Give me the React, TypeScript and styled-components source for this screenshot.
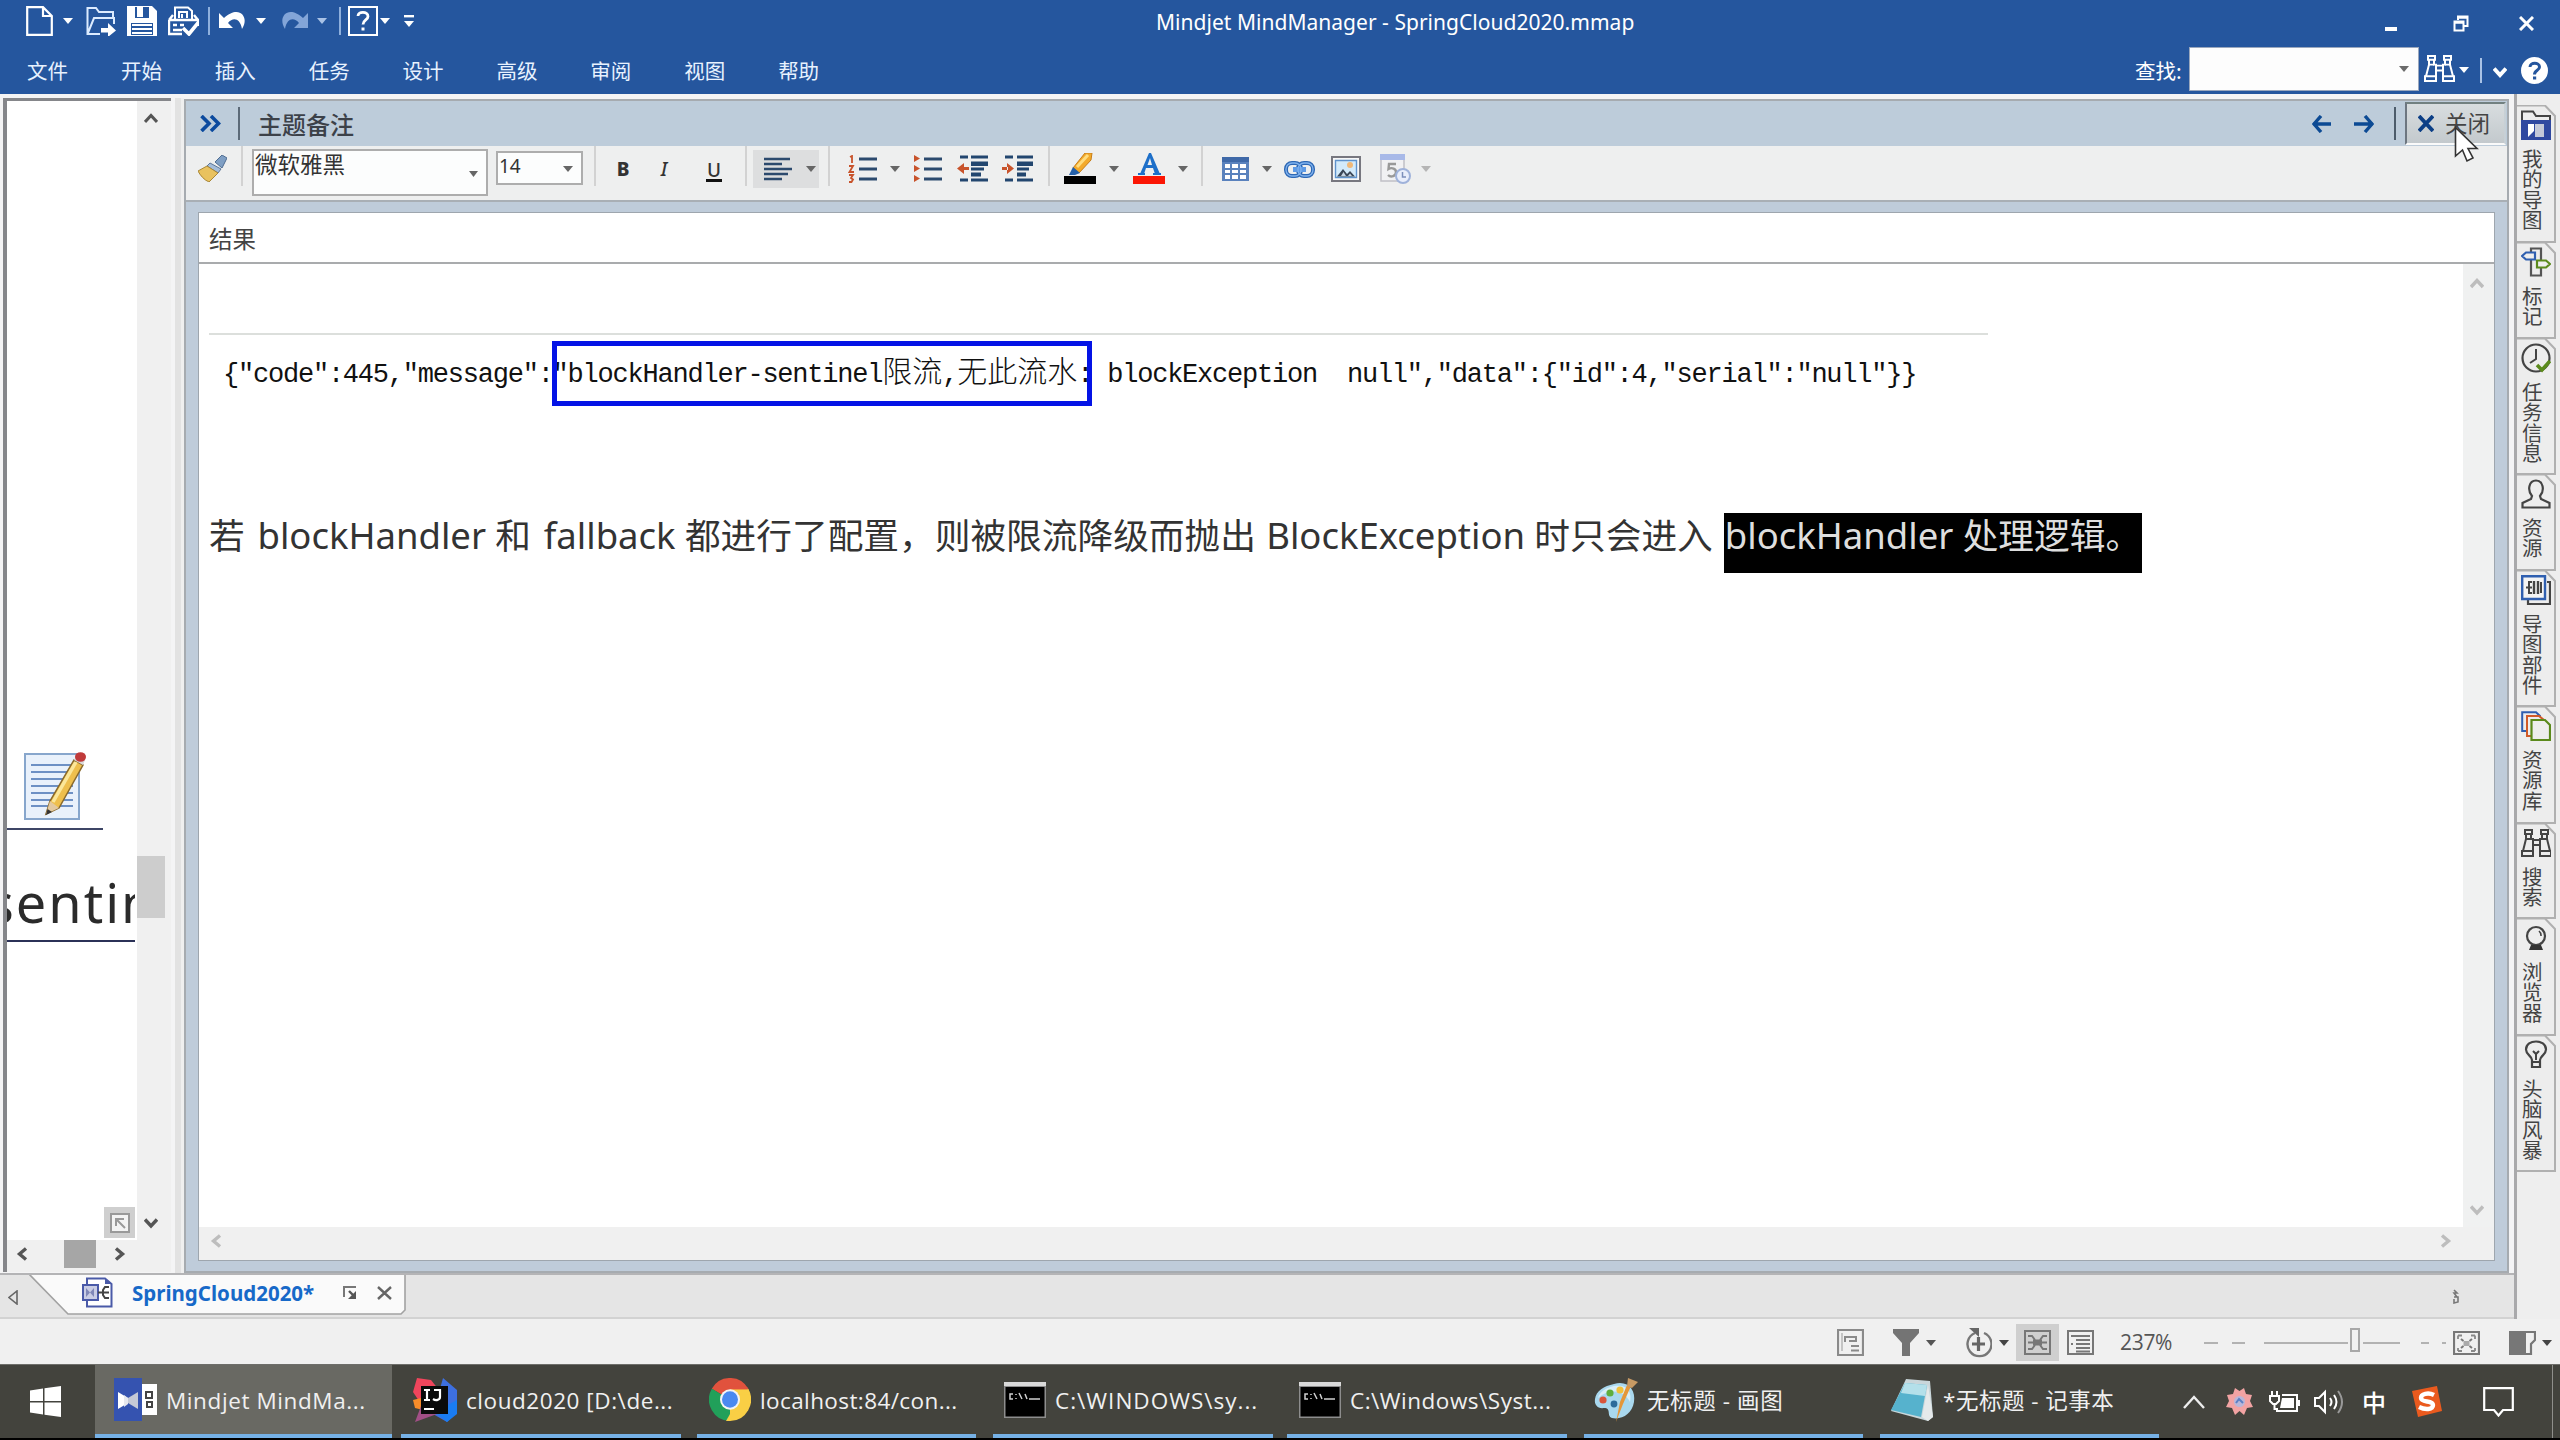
import React from "react";
import styled, { createGlobalStyle, css } from "styled-components";

const UI = `"Noto Sans", "Noto Sans CJK SC", sans-serif`;
const CJK = `"Noto Sans CJK SC", "Noto Sans", sans-serif`;

const Global = createGlobalStyle`
  *, *::before, *::after { box-sizing: border-box; }
  html, body { margin: 0; padding: 0; background: #f0f0f0; }
  body { font-family: ${UI}; overflow: hidden; }
  svg { display: block; flex: none; }
`;

/* ---------- shared parts ---------- */

const Screen = styled.div`
  width: 2560px;
  height: 1440px;
  display: flex;
  flex-direction: column;
  overflow: hidden;
  background: #f0f0f0;
`;

const IconBox = styled.span<{ $ml?: number; $mt?: number }>`
  display: block;
  flex: none;
  margin-left: ${(p) => p.$ml ?? 0}px;
  margin-top: ${(p) => p.$mt ?? 0}px;
`;

type IconProps = {
  w: number;
  h: number;
  vb?: string;
  ml?: number;
  mt?: number;
  children: React.ReactNode;
};

const Icon = ({ w, h, vb, ml, mt, children }: IconProps) => (
  <IconBox $ml={ml} $mt={mt}>
    <svg width={w} height={h} viewBox={vb ?? `0 0 ${w} ${h}`} fill="none" preserveAspectRatio="none">
      {children}
    </svg>
  </IconBox>
);

const Caret = ({ ml, mt, color = "#666", w = 10 }: { ml?: number; mt?: number; color?: string; w?: number }) => (
  <Icon w={w} h={6} vb="0 0 10 6" ml={ml} mt={mt}>
    <path d="M0 0H10L5 6Z" fill={color} />
  </Icon>
);

const Divider = styled.span<{ $ml: number; $h: number; $c: string; $w?: number }>`
  flex: none;
  width: ${(p) => p.$w ?? 2}px;
  height: ${(p) => p.$h}px;
  margin-left: ${(p) => p.$ml}px;
  background: ${(p) => p.$c};
`;

const Chevron = ({ dir, color, s = 14, sw = 3.4, ml, mt }: { dir: "up" | "down" | "left" | "right"; color: string; s?: number; sw?: number; ml?: number; mt?: number }) => {
  const d = {
    up: "M1 11L7 4.500L13 11",
    down: "M1 3.500L7 10L13 3.500",
    left: "M11 1.500L4.500 7L11 12.500",
    right: "M3 1.500L9.500 7L3 12.500",
  }[dir];
  return (
    <Icon w={s} h={s} vb="0 0 14 14" ml={ml} mt={mt}>
      <path d={d} stroke={color} strokeWidth={sw} />
    </Icon>
  );
};

/* ---------- title bar and menu ---------- */

const TopBar = styled.header`
  height: 94px;
  flex: none;
  background: #25569e;
  color: #fff;
`;

const TitleRow = styled.div`
  display: flex;
  height: 47px;
  padding-left: 26px;
`;

const QuickTools = styled.div`
  display: flex;
  align-items: center;
  width: 1130px;
  height: 41px;
`;

const WindowTitle = styled.div`
  font-size: 21px;
  line-height: 45px;
  letter-spacing: 0.03px;
  white-space: nowrap;
`;

const WindowButtons = styled.div`
  display: flex;
  align-items: center;
  height: 47px;
  margin-left: auto;
  padding-right: 26px;
`;

const MenuRow = styled.nav`
  display: flex;
  height: 47px;
  padding-left: 27px;
`;

const MenuItem = styled.span`
  width: 93.9px;
  font: 20.5px/47px ${CJK};
  color: #e8f2ff;
`;

const SearchArea = styled.div`
  display: flex;
  align-items: center;
  height: 46px;
  margin-left: auto;
  padding-right: 12px;
`;

const SearchLabel = styled.span`
  font: 20.5px/44px ${CJK};
  width: 54px;
  white-space: nowrap;
`;

const SearchInput = styled.div`
  display: flex;
  align-items: center;
  justify-content: flex-end;
  align-self: flex-start;
  width: 230px;
  height: 44px;
  padding-right: 9px;
  background: #fdfdfd;
  border: 1px solid #9aa7bd;
`;

const BinocularPaths = ({ c }: { c: string }) => (
  <g stroke={c} strokeWidth="2">
    <path d="M4 2h7v4H4zM20 2h7v4h-7zM5 6v5L2 23M10 6v5h2v12M21 6v5h-2v12M26 6v5l3 12" />
    <path d="M1 23h11v5H1zM19 23h11v5H19zM11 12h9M12 17h7M5 11h5M21 11h5" />
  </g>
);

const TopHeader = () => (
  <TopBar>
    <TitleRow>
      <QuickTools>
        <Icon w={27} h={30}>
          <path d="M1.200 1.200H17L25.800 10V28.800H1.200ZM17 1.200V10H25.800" stroke="#fff" strokeWidth="2.200" />
        </Icon>
        <Caret ml={10} color="#fff" />
        <Icon w={30} h={30} ml={13}>
          <path d="M14 28H1.500V2H10L13 6H27V12M1.500 28L8 12H28V18" stroke="#dcebff" strokeWidth="2" />
          <path d="M15 22H22V17L30 24.500L22 31V26.500H15Z" fill="#fff" />
        </Icon>
        <Icon w={30} h={30} ml={11}>
          <path d="M0 0H25L30 5V30H0Z" fill="#fff" />
          <path d="M8 1H22V12H8Z" fill="#25569e" />
          <path d="M10 1H16V11H10Z" fill="#fff" />
          <path d="M4 17H26V29H4Z" fill="#25569e" />
          <path d="M5 19H25M5 23H25M5 27H25" stroke="#fff" strokeWidth="2.200" />
        </Icon>
        <Icon w={31} h={30} ml={11}>
          <path d="M7 14V1.500H20L24 5V14M11 12V6H19V12M14 12V8" stroke="#fff" strokeWidth="2" />
          <path d="M1 14L5 9M30 14L26 9M1 14H30V20M1 14V28H14" stroke="#fff" strokeWidth="2.400" />
          <path d="M5 19H9M12 19H16M5 24H14" stroke="#fff" strokeWidth="2.400" />
          <path d="M15 22L21 28L30 17" stroke="#fff" strokeWidth="3.600" />
        </Icon>
        <Divider $ml={9} $h={28} $c="#8fb0dd" />
        <Icon w={28} h={24} ml={9}>
          <path d="M0 4V19H14L9 14C14 8 21 9 23 20C31 8 20 -5 5 9Z" fill="#fff" />
        </Icon>
        <Caret ml={9} color="#fff" />
        <Icon w={28} h={24} ml={14}>
          <path d="M28 4V19H14L19 14C14 8 7 9 5 20C-3 8 8 -5 23 9Z" fill="#83a5d8" />
        </Icon>
        <Caret ml={9} color="#a9c2e6" />
        <Divider $ml={12} $h={28} $c="#8fb0dd" />
        <Icon w={30} h={30} ml={7}>
          <path d="M1 1H29V29H1Z" stroke="#fff" strokeWidth="2" />
          <path d="M10 10C10 5 20 5 20 10.500C20 14 15 14 15 18.500" stroke="#fff" strokeWidth="2.800" />
          <path d="M13.500 21.500H16.500V24.500H13.500Z" fill="#fff" />
        </Icon>
        <Caret ml={2} color="#fff" />
        <Icon w={10} h={12} ml={14}>
          <path d="M0 1.200H10" stroke="#fff" strokeWidth="2.400" />
          <path d="M0 6H10L5 12Z" fill="#fff" />
        </Icon>
      </QuickTools>
      <WindowTitle>Mindjet MindManager - SpringCloud2020.mmap</WindowTitle>
      <WindowButtons>
        <Icon w={12} h={4} mt={10}>
          <path d="M0 0H12V4H0Z" fill="#fff" />
        </Icon>
        <Icon w={16} h={17} ml={56}>
          <path d="M5 5V1.500H14.500V11H11M1.500 6.500H10.500V15.500H1.500Z" stroke="#fff" strokeWidth="2" />
          <path d="M5 2.500H15M1 7.500H11" stroke="#fff" strokeWidth="2.500" />
        </Icon>
        <Icon w={15} h={15} ml={50}>
          <path d="M1 1L14 14M14 1L1 14" stroke="#fff" strokeWidth="3" />
        </Icon>
      </WindowButtons>
    </TitleRow>
    <MenuRow>
      {["文件", "开始", "插入", "任务", "设计", "高级", "审阅", "视图", "帮助"].map((m) => (
        <MenuItem key={m}>{m}</MenuItem>
      ))}
      <SearchArea>
        <SearchLabel>查找:</SearchLabel>
        <SearchInput>
          <Caret color="#6b6b6b" />
        </SearchInput>
        <Icon w={31} h={29} vb="0 0 31 30" ml={5} mt={-3}>
          <BinocularPaths c="#fff" />
        </Icon>
        <Caret ml={4} color="#fff" />
        <Divider $ml={11} $h={25} $c="#a9c2e6" />
        <Chevron dir="down" color="#fff" sw={4} ml={11} mt={3} />
        <Icon w={27} h={27} ml={14}>
          <circle cx="13.500" cy="13.500" r="13.500" fill="#fff" />
          <path d="M9 10C9 5 18.500 5 18.500 10C18.500 13.500 13.500 13 13.500 17.500" stroke="#25569e" strokeWidth="3" />
          <path d="M12 19.500H15.200V22.500H12Z" fill="#25569e" />
        </Icon>
      </SearchArea>
    </MenuRow>
  </TopBar>
);

/* ---------- map pane on the left ---------- */

const Body = styled.div`
  display: flex;
  height: 1225px;
  flex: none;
`;

const MainColumn = styled.div`
  display: flex;
  flex-direction: column;
  width: 2514px;
  flex: none;
`;

const WorkArea = styled.div`
  display: flex;
  height: 1181px;
  padding-top: 4px;
  background: #f4f4f5;
  border-bottom: 2px solid #b4b4b6;
`;

const MapPane = styled.section`
  display: flex;
  flex-direction: column;
  width: 168px;
  height: 1174px;
  margin-left: 3px;
  flex: none;
  border-left: 4px solid #85868a;
  border-top: 3px solid #85868a;
  background: #fff;
`;

const MapTop = styled.div`
  display: flex;
  height: 1139px;
`;

const MapCanvas = styled.div`
  width: 130px;
  padding-right: 2px;
  overflow: hidden;
  background: #fff;
`;

const NoteMark = styled.div`
  padding: 651px 0 8px 17px;
  width: 96px;
  border-bottom: 2px solid #3d4566;
`;

const TopicText = styled.div`
  height: 112px;
  padding: 34px 0 0;
  border-bottom: 2px solid #2b3157;
  font: 54px/76px ${UI};
  letter-spacing: 2px;
  color: #2b2b2b;
  text-indent: -19px;
  white-space: nowrap;
  overflow: hidden;
`;

const LocateButton = styled.div`
  display: flex;
  align-items: center;
  justify-content: center;
  width: 31px;
  height: 31px;
  margin: 265px 0 0 97px;
  background: #cfcfcf;
`;

const MapVScroll = styled.div`
  display: flex;
  flex-direction: column;
  align-items: flex-start;
  width: 34px;
  background: #f0f0f0;
`;

const VThumb = styled.div`
  width: 28px;
  height: 62px;
  margin: 731px 0 298px;
  background: #cdcdcd;
`;

const MapHScroll = styled.div`
  display: flex;
  align-items: flex-start;
  height: 32px;
  background: #f0f0f0;
`;

const HThumb = styled.div`
  width: 32px;
  height: 28px;
  margin-left: 35px;
  background: #a6a6a6;
`;

const Splitter = styled.div`
  width: 9px;
  flex: none;
  margin-left: 4px;
  background: linear-gradient(90deg, #e2e2e2 0 6px, #efefef 6px);
`;

const MapArea = () => (
  <MapPane>
    <MapTop>
      <MapCanvas>
        <NoteMark>
          <Icon w={62} h={68}>
            <path d="M1 2H55V67H1Z" fill="#e9f1fb" stroke="#87a6cc" strokeWidth="2" />
            <path d="M7 13H49M7 20H49M7 27H49M7 34H49M7 41H49M7 48H49M7 54H49" stroke="#6d90c4" strokeWidth="2.200" />
            <path d="M22 62L26 49L50 8L59 13L35 56Z" fill="#eebf4d" stroke="#8a6a2c" strokeWidth="1.500" />
            <path d="M29 50L52 10" stroke="#fbe79a" strokeWidth="3.500" />
            <path d="M22 62L26 49L35 56Z" fill="#e3c9a0" />
            <path d="M22 63L23.500 57L28 60Z" fill="#333" />
            <path d="M50 8L53 3L61 8L59 13Z" fill="#d9d9d9" />
            <ellipse cx="56.500" cy="5" rx="5.500" ry="4.800" fill="#c03a3a" />
          </Icon>
        </NoteMark>
        <TopicText>sentinel</TopicText>
        <LocateButton>
          <Icon w={20} h={20}>
            <path d="M1 1H19V19H1Z" fill="#f3f3f3" stroke="#999" strokeWidth="2" />
            <path d="M6 13V6H14M6 6L15 15" stroke="#999" strokeWidth="2" />
          </Icon>
        </LocateButton>
      </MapCanvas>
      <MapVScroll>
        <Chevron dir="up" color="#555" sw={3} ml={7} mt={10} />
        <VThumb />
        <Chevron dir="down" color="#555" ml={7} />
      </MapVScroll>
    </MapTop>
    <MapHScroll>
      <Chevron dir="left" color="#555" ml={8} mt={7} />
      <HThumb />
      <Chevron dir="right" color="#555" ml={17} mt={7} />
    </MapHScroll>
  </MapPane>
);

/* ---------- notes panel ---------- */

const NotesPanel = styled.section`
  display: flex;
  flex-direction: column;
  width: 2325px;
  height: 1174px;
  margin-top: 1px;
  flex: none;
  border: 2px solid #a6abb0;
  background: #bfccda;
`;

const NotesHeader = styled.div`
  position: relative;
  display: flex;
  align-items: center;
  height: 45px;
  padding-left: 14px;
  background: #bdccda;
`;

const NotesTitle = styled.h2`
  margin: 0 auto 0 18px;
  font: 500 24px/43px ${CJK};
  color: #3c4149;
`;

const CloseButton = styled.div`
  display: flex;
  align-items: center;
  align-self: flex-start;
  width: 101px;
  height: 43px;
  margin: 1px 1px 0 9px;
  padding-left: 11px;
  border: 2px solid #fafafa;
  border-top-color: #718080;
  border-left-color: #6d7680;
  border-right-color: #c7d0d6;
  background: linear-gradient(#d8dddf, #c3c9cd);
  font: 22.5px/36px ${CJK};
  color: #444;
  gap: 11px;
  white-space: nowrap;
`;

const CloseText = styled.span`
  height: 39px;
`;

const Pointer = styled.span`
  position: absolute;
  left: 2268px;
  top: 25px;
  z-index: 3;
`;

const Toolbar = styled.div`
  display: flex;
  align-items: flex-start;
  height: 56px;
  padding-left: 12px;
  background: #eeefef;
  border-bottom: 2px solid #a9afb5;
`;

const ToolGroup = styled.div<{ $ml?: number; $on?: boolean }>`
  display: flex;
  align-items: center;
  height: 38px;
  margin: 4px 0 0 ${(p) => p.$ml ?? 0}px;
  ${(p) =>
    p.$on &&
    css`
      background: #dddedf;
      padding: 0 3px 0 11px;
    `}
`;

const Combo = styled.div<{ $w: number; $h: number; $ml: number; $mt: number }>`
  display: flex;
  justify-content: space-between;
  width: ${(p) => p.$w}px;
  height: ${(p) => p.$h}px;
  margin: ${(p) => p.$mt}px 0 0 ${(p) => p.$ml}px;
  padding: 0 8px 0 1px;
  border: 2px solid #adadad;
  background: #fcfdfd;
  font: 22.500px/24px ${CJK};
  color: #333;
`;

const SizeText = styled.span`
  font: 19px/27px ${UI};
`;

const Letter = styled.span<{ $kind: "b" | "i" | "u"; $ml: number }>`
  width: 16px;
  margin-left: ${(p) => p.$ml}px;
  text-align: center;
  font: ${(p) => (p.$kind === "b" ? "800" : p.$kind === "i" ? "italic 500" : "500")} 19px/20px ${UI};
  color: #333;
  ${(p) =>
    p.$kind === "u" &&
    css`
      border-bottom: 3px solid #111;
      margin-top: 4px;
      line-height: 18px;
    `}
`;

const NotesBody = styled.div`
  display: flex;
  flex: 1;
  padding: 10px 12px 10px 12px;
`;

const NoteBox = styled.div`
  display: flex;
  flex-direction: column;
  width: 100%;
  border: 1px solid #9ea6ae;
  background: #fff;
`;

const NoteTopic = styled.div`
  height: 51px;
  padding-left: 10px;
  border-bottom: 2px solid #a9abad;
  font: 23.5px/51px ${CJK};
  color: #444;
`;

const NoteScroller = styled.div`
  display: flex;
  flex: 1;
`;

const Doc = styled.article`
  display: flex;
  flex-direction: column;
  width: 2264px;
  padding-left: 10px;
`;

const Rule = styled.hr`
  width: 1779px;
  height: 2px;
  margin: 69px 0 0;
  border: 0;
  background: #dcdfdc;
`;

const CodeLine = styled.div`
  position: relative;
  height: 65px;
  margin-top: 6px;
  padding-left: 14px;
  font: 27px/56px "Liberation Mono", "Noto Sans CJK SC", monospace;
  letter-spacing: -1.22px;
  color: #111;
  white-space: pre;
`;

const CodeCjk = styled.span`
  font: 300 30px/56px ${CJK};
  letter-spacing: 0;
`;

const BlueFrame = styled.span`
  position: absolute;
  left: 343px;
  top: 0;
  width: 540px;
  height: 65px;
  border: 5px solid #0413e6;
`;

const Paragraph = styled.p`
  display: flex;
  height: 60px;
  margin: 107px 0 0;
  font: 35.7px/44px ${UI};
  color: #333;
  white-space: pre;
`;

const Latin = styled.span<{ $ml?: number }>`
  font-size: 36.5px;
  margin-left: ${(p) => p.$ml ?? 3.5}px;
`;

const Marked = styled.span`
  width: 418px;
  margin-left: 11px;
  padding-left: 1px;
  background: #000;
  color: #dedede;
`;

const DocVScroll = styled.div`
  display: flex;
  flex-direction: column;
  justify-content: space-between;
  width: 31px;
  padding: 12px 7px 10px;
  background: #f0f1f1;
`;

const DocHScroll = styled.div`
  display: flex;
  align-items: center;
  justify-content: space-between;
  width: 2295px;
  height: 33px;
  padding: 0 41px 5px 10px;
  background: #f0f0f0;
`;

const ListLines = ({ x, ys }: { x: number; ys: number[] }) => (
  <>
    {ys.map((y) => (
      <path key={y} d={`M${x} ${y}H29`} stroke="#2c4a6e" strokeWidth="3" />
    ))}
  </>
);

const NotesToolbar = () => (
  <Toolbar>
    <Icon w={29} h={27} mt={9}>
      <path d="M17 7L24 0L29 3L24 13Z" fill="#7f9fc4" stroke="#4f6d92" />
      <path d="M12 8L23 14L20 18L9 11Z" fill="#a5bdd9" stroke="#5b7698" />
      <path d="M9 11L20 18L11 27C6 25 2 20 0 16Z" fill="#e9c25f" stroke="#a98737" />
    </Icon>
    <Divider $ml={14} $h={40} $c="#d2d2d2" />
    <Combo $w={236} $h={47} $ml={9} $mt={3}>
      微软雅黑
      <Caret mt={20} w={9} />
    </Combo>
    <Combo $w={87} $h={34} $ml={8} $mt={5}>
      <SizeText>14</SizeText>
      <Caret mt={13} w={10} />
    </Combo>
    <Divider $ml={11} $h={40} $c="#d2d2d2" />
    <ToolGroup>
      <Letter $kind="b" $ml={19}>B</Letter>
      <Letter $kind="i" $ml={25}>I</Letter>
      <Letter $kind="u" $ml={34}>U</Letter>
    </ToolGroup>
    <Divider $ml={23} $h={40} $c="#d2d2d2" />
    <ToolGroup $ml={6} $on>
      <Icon w={28} h={24}>
        <path d="M0 2H26M0 7H18M0 12H28M0 17H24M0 22H18" stroke="#2c4a6e" strokeWidth="2.600" />
      </Icon>
      <Caret ml={14} />
    </ToolGroup>
    <Divider $ml={9} $h={40} $c="#d2d2d2" />
    <ToolGroup $ml={18}>
      <Icon w={30} h={28}>
        <path d="M2 2L4 1V8M1 11H5L1.500 17H6M1 20H5L3 23L5 24.500L3.500 27H1" stroke="#c8532b" strokeWidth="1.800" />
        <ListLines x={11} ys={[4, 14, 24]} />
      </Icon>
      <Caret ml={12} />
      <Icon w={30} h={28} ml={13}>
        <path d="M1 0L7 3.500L1 7ZM1 10L7 13.500L1 17ZM1 20L7 23.500L1 27Z" fill="#c8532b" />
        <ListLines x={11} ys={[4, 14, 24]} />
      </Icon>
      <Icon w={31} h={28} ml={14}>
        <path d="M0 13.500L7 8V19ZM6 12H12V15H6Z" fill="#c8532b" />
        <path d="M3 2H11M14 2H31M14 8H31M14 9.500H31M14 14H27M14 19H24M14 20H24M3 25H11M14 25H31" stroke="#22466f" strokeWidth="3" />
      </Icon>
      <Icon w={31} h={28} ml={14}>
        <path d="M12 13.500L5 8V19ZM0 12H6V15H0Z" fill="#c8532b" />
        <path d="M3 2H11M15 2H31M15 8H31M15 9.500H31M15 14H27M15 19H24M15 20H24M3 25H11M15 25H31" stroke="#22466f" strokeWidth="3" />
      </Icon>
    </ToolGroup>
    <Divider $ml={15} $h={40} $c="#d2d2d2" />
    <ToolGroup $ml={14}>
      <Icon w={32} h={32}>
        <path d="M9 15L21 0H28L27 7L15 20Z" fill="#f3aa2b" stroke="#c77d18" />
        <path d="M13 14L24 2" stroke="#ffdc7e" strokeWidth="3" />
        <path d="M9 14L16 20L11 22H5Z" fill="#235fa8" />
        <path d="M0 23H32V31H0Z" fill="#000" />
      </Icon>
      <Caret ml={13} />
      <Icon w={32} h={32} ml={14}>
        <path d="M7 21L16 0H18L27 21H22L20 15H13L11 21ZM14.500 12H19L17 5Z" fill="#1d6fc9" fillRule="evenodd" />
        <path d="M5 21H12M20 21H28" stroke="#1d6fc9" strokeWidth="2" />
        <path d="M0 23H32V31H0Z" fill="#fb1604" />
      </Icon>
      <Caret ml={13} />
    </ToolGroup>
    <Divider $ml={13} $h={40} $c="#d2d2d2" />
    <ToolGroup $ml={19}>
      <Icon w={27} h={24}>
        <path d="M0 0H27V24H0Z" fill="#5a82bd" />
        <path d="M0 0H27V5H0Z" fill="#3f69a8" />
        <path d="M3 7H8V11H3ZM10 7H16V11H10ZM18 7H24V11H18ZM3 13H8V16H3ZM10 13H16V16H10ZM18 13H24V16H18ZM3 18H8V22H3ZM10 18H16V22H10ZM18 18H24V22H18Z" fill="#fff" />
      </Icon>
      <Caret ml={13} />
      <Icon w={31} h={17} ml={12}>
        <rect x="2" y="2" width="15" height="13" rx="6" stroke="#2e68b5" strokeWidth="4" />
        <rect x="14" y="2" width="15" height="13" rx="6" stroke="#2e68b5" strokeWidth="4" />
        <path d="M9 8.500H22" stroke="#5f9be6" strokeWidth="5" />
        <rect x="2" y="2" width="15" height="13" rx="6" stroke="#7fb2ee" strokeWidth="1.300" />
        <rect x="14" y="2" width="15" height="13" rx="6" stroke="#7fb2ee" strokeWidth="1.300" />
      </Icon>
      <Icon w={30} h={26} ml={16}>
        <path d="M1 1H29V25H1Z" fill="#f7f7f7" stroke="#77777f" strokeWidth="2" />
        <path d="M4.500 4.500H25.500V21.500H4.500Z" fill="#d3eafa" stroke="#5e92cc" strokeWidth="1.400" />
        <path d="M6 20.500L12 13L16 18L19 15L24 20.500Z" fill="#3a4657" />
        <path d="M10 20L12.500 16L15 20ZM17 20L19 17.500L21 20Z" fill="#c9d6e2" />
        <circle cx="19" cy="9" r="3" fill="#f0b878" />
      </Icon>
      <Icon w={31} h={30} ml={19}>
        <path d="M1 1H24V27H1Z" fill="#f1f1f3" stroke="#c0c0c6" strokeWidth="1.500" />
        <path d="M0 0H25V6H0Z" fill="#a8b9e8" />
        <path d="M16 10H9L8.500 15C12 13 16 15 16 18C16 22 11 24 8 21" stroke="#999" strokeWidth="2.400" />
        <circle cx="23" cy="22" r="7" fill="#e9eefb" stroke="#9fb2da" strokeWidth="2" />
        <path d="M22.500 18V23H26" stroke="#7c8fba" strokeWidth="1.500" />
      </Icon>
      <Caret ml={10} color="#b5b5b5" />
    </ToolGroup>
  </Toolbar>
);

const Notes = () => (
  <NotesPanel>
    <NotesHeader>
      <Icon w={21} h={17}>
        <path d="M1.500 1L9 8.500L1.500 16M11 1L18.500 8.500L11 16" stroke="#0c4a9e" strokeWidth="3.600" />
      </Icon>
      <Divider $ml={17} $h={33} $c="#5c6a78" />
      <NotesTitle>主题备注</NotesTitle>
      <Icon w={19} h={18}>
        <path d="M9 1L2 9L9 17M1 9H19" stroke="#0c4a94" strokeWidth="3.400" />
      </Icon>
      <Icon w={20} h={18} ml={23}>
        <path d="M11 1L18 9L11 17M0 9H19" stroke="#0c4a94" strokeWidth="3.400" />
      </Icon>
      <Divider $ml={20} $h={33} $c="#4d5c6b" />
      <CloseButton>
        <Icon w={16} h={17}>
          <path d="M1 1L15 16M15 1L1 16" stroke="#0c3f86" strokeWidth="3.800" />
        </Icon>
        <CloseText>关闭</CloseText>
      </CloseButton>
      <Pointer>
        <svg width="25" height="38" viewBox="0 0 25 38">
          <path d="M1.500 1.500V30L8.500 24L13 35L19 32L14 22.500H23Z" fill="#fff" stroke="#333" strokeWidth="1.600" />
        </svg>
      </Pointer>
    </NotesHeader>
    <NotesToolbar />
    <NotesBody>
      <NoteBox>
        <NoteTopic>结果</NoteTopic>
        <NoteScroller>
          <Doc>
            <Rule />
            <CodeLine>
              {'{"code":445,"message":"blockHandler-sentinel'}
              <CodeCjk>限流</CodeCjk>,<CodeCjk>无此流水</CodeCjk>
              {': blockException  null","data":{"id":4,"serial":"null"}}'}
              <BlueFrame />
            </CodeLine>
            <Paragraph>
              <span>
                若 <Latin>blockHandler</Latin> 和 <Latin>fallback</Latin> 都进行了配置，则被限流降级而抛出{" "}
                <Latin $ml={1}>BlockException</Latin> 时只会进入
              </span>
              <Marked>
                <Latin $ml={0}>blockHandler</Latin> 处理逻辑。
              </Marked>
            </Paragraph>
          </Doc>
          <DocVScroll>
            <Chevron dir="up" color="#bdbdbd" />
            <Chevron dir="down" color="#bdbdbd" />
          </DocVScroll>
        </NoteScroller>
        <DocHScroll>
          <Chevron dir="left" color="#bdbdbd" />
          <Chevron dir="right" color="#bdbdbd" />
        </DocHScroll>
      </NoteBox>
    </NotesBody>
  </NotesPanel>
);

/* ---------- document tabs ---------- */

const TabStrip = styled.div`
  display: flex;
  align-items: flex-start;
  height: 44px;
  background: #e5e5e5;
  border-bottom: 2px solid #d2d2d2;
`;

const DocTab = styled.div`
  position: relative;
  display: flex;
  align-items: center;
  width: 378px;
  height: 40px;
  margin-left: 11px;
  padding: 0 15px 5px 53px;
`;

const TabShape = styled.svg`
  position: absolute;
  inset: 0;
`;

const TabLabel = styled.span`
  position: relative;
  width: 211px;
  margin-left: 19px;
  font: 700 20.5px/36px ${UI};
  color: #1769c8;
  white-space: nowrap;
`;

const TabTools = styled.span`
  position: relative;
  display: flex;
  align-items: center;
`;

const DocTabs = () => (
  <TabStrip>
    <Icon w={10} h={15} ml={8} mt={15}>
      <path d="M9 1V14L1 7.500Z" stroke="#666" strokeWidth="1.600" />
    </Icon>
    <DocTab>
      <TabShape width="378" height="40" viewBox="0 0 378 40">
        <path d="M0 -1L39 39H372L376 35V-1Z" fill="#fafafa" stroke="#a2a2a2" strokeWidth="1.600" />
      </TabShape>
      <TabTools>
        <Icon w={31} h={31}>
          <path d="M5 7V1.500H23L29.500 7V29.500H5V24" fill="#fff" stroke="#4a5aa8" strokeWidth="2" />
          <path d="M1 8H16V23H1Z" fill="#c9cde4" stroke="#4a5aa8" strokeWidth="2" />
          <path d="M4 11V20L8 15.500L12 20V11L8 15.500Z" fill="#8088b8" />
          <path d="M16 15.500H22M27 10H23L21 13V18L23 21H27M21 15.500H27" stroke="#444" strokeWidth="2" />
          <path d="M23 1V7H30Z" fill="#4a5aa8" />
        </Icon>
      </TabTools>
      <TabLabel>SpringCloud2020*</TabLabel>
      <TabTools>
        <Icon w={14} h={14}>
          <path d="M1 11V1H13" stroke="#777" strokeWidth="2" />
          <path d="M6 5L11 10" stroke="#555" strokeWidth="2.400" />
          <path d="M13 5V13H5Z" fill="#555" />
        </Icon>
        <Icon w={15} h={14} ml={20}>
          <path d="M1 1L14 13M14 1L1 13" stroke="#666" strokeWidth="2.400" />
        </Icon>
      </TabTools>
    </DocTab>
    <Icon w={8} h={16} ml={2045} mt={14}>
      <path d="M2 1L5 4H2L5 8M2 8H6V13L2 14V10" stroke="#777" strokeWidth="1.600" />
    </Icon>
  </TabStrip>
);

/* ---------- task pane tabs on the right ---------- */

const SidePane = styled.aside`
  width: 46px;
  padding-top: 11px;
  border-left: 3px solid #a9a9ab;
  background: #eeeeee;
`;

const SideTab = styled.div<{ $h: number }>`
  position: relative;
  width: 39px;
  height: ${(p) => p.$h}px;
  padding: 5px 0 0 4px;
`;

const SideTabEdge = styled.svg`
  position: absolute;
  left: 0;
  top: 0;
`;

const SideIcon = styled.span`
  position: relative;
  display: flex;
  align-items: center;
  justify-content: center;
  width: 30px;
  height: 30px;
`;

const SideText = styled.span`
  position: relative;
  display: block;
  width: 21px;
  margin: 8px 0 0 1px;
  font: 20.5px/20.4px ${CJK};
  color: #444;
  word-break: break-all;
`;

const sideTabs: { h: number; label: string; icon: React.ReactNode }[] = [
  {
    h: 137,
    label: "我的导图",
    icon: (
      <>
        <path d="M1 10V1.500H12L15 6H29V10" stroke="#444" strokeWidth="2" />
        <path d="M0 10H30V30H0Z" fill="#2f48a0" />
        <path d="M7 14V27L13 21V14ZM23 14V27L17 21V14Z" fill="#fff" />
        <path d="M14 14H23V27H14Z" fill="#c4c8d8" />
      </>
    ),
  },
  {
    h: 96,
    label: "标记",
    icon: (
      <>
        <path d="M10 1.500H20V28.500H10Z" stroke="#555" strokeWidth="2.200" />
        <path d="M14 5.500V12.500H5L1 9L5 5.500Z" fill="#eee" stroke="#2f5fb0" strokeWidth="2.200" />
        <path d="M16 13.500V20.500H25L29 17L25 13.500Z" fill="#eee" stroke="#5b8a1c" strokeWidth="2.200" />
      </>
    ),
  },
  {
    h: 136,
    label: "任务信息",
    icon: (
      <>
        <circle cx="15" cy="15" r="13.500" stroke="#444" strokeWidth="2.200" />
        <path d="M15 6V16L9 20" stroke="#444" strokeWidth="2" />
        <path d="M16 22L21 27L29 18" stroke="#5b8a1c" strokeWidth="3.600" />
      </>
    ),
  },
  {
    h: 96,
    label: "资源",
    icon: (
      <path d="M11 17C6 11 8 1.500 15 1.500S24 11 19 17L20 20L28.500 24V28.500H1.500V24L10 20Z" stroke="#444" strokeWidth="2.200" />
    ),
  },
  {
    h: 136,
    label: "导图部件",
    icon: (
      <>
        <path d="M26 7H29V29H7V25" stroke="#444" strokeWidth="2.200" />
        <path d="M1.200 1.200H24V24H1.200Z" fill="#f4f4f4" stroke="#2f5fb0" strokeWidth="2.400" />
        <path d="M13 6V19M17 6V19" stroke="#444" strokeWidth="2.400" />
        <path d="M11 7H8V18H11M5 12.500H11M19 8H20V17H19" stroke="#444" strokeWidth="2" />
      </>
    ),
  },
  {
    h: 117,
    label: "资源库",
    icon: (
      <>
        <path d="M1.200 1.200H15L19 5V20H1.200Z" stroke="#2f5fb0" strokeWidth="2" />
        <path d="M6 5H18L23 9V25H6Z" fill="#eee" stroke="#d05a28" strokeWidth="2" />
        <path d="M10.500 9H24L29 14V29H10.500Z" fill="#eee" stroke="#5b8a1c" strokeWidth="2.200" />
      </>
    ),
  },
  { h: 95, label: "搜索", icon: <BinocularPaths c="#444" /> },
  {
    h: 117,
    label: "浏览器",
    icon: (
      <>
        <circle cx="15" cy="13" r="9" stroke="#444" strokeWidth="2.200" />
        <path d="M18 8A6 6 0 0 1 20 13" stroke="#444" strokeWidth="1.600" />
        <path d="M10 22H20L22 27H8Z" fill="#333" />
      </>
    ),
  },
  {
    h: 136,
    label: "头脑风暴",
    icon: (
      <>
        <path d="M11 20C11 16 5 15 5 9.500C5 4 10 1.500 15 1.500S25 4 25 9.500C25 15 19 16 19 20V27H11Z" stroke="#444" strokeWidth="2.200" />
        <path d="M11 22H19M15 20V13M12 11L15 14L18 11" stroke="#444" strokeWidth="2" />
      </>
    ),
  },
];

const SideTabs = () => (
  <SidePane>
    {sideTabs.map((t) => (
      <SideTab key={t.label} $h={t.h}>
        <SideTabEdge width="40" height={t.h + 1} viewBox={`0 0 40 ${t.h + 1}`}>
          <path d={`M0 .5H28L38 11V${t.h}H0`} fill="#ededed" stroke="#b0b0b0" strokeWidth="2" />
        </SideTabEdge>
        <SideIcon>
          <svg width="30" height="30" viewBox="0 0 30 30" fill="none">
            {t.icon}
          </svg>
        </SideIcon>
        <SideText>{t.label}</SideText>
      </SideTab>
    ))}
  </SidePane>
);

/* ---------- status bar ---------- */

const StatusRow = styled.div`
  display: flex;
  align-items: center;
  height: 45px;
  flex: none;
  padding: 2px 0 0 1837px;
  background: #f0f0f0;
`;

const ModeButton = styled.span`
  display: flex;
  align-items: center;
  justify-content: center;
  width: 43px;
  height: 37px;
  margin-left: 7px;
  background: #cfcfcf;
`;

const ZoomText = styled.span`
  width: 84px;
  margin: -2px 0 0 26px;
  font: 21px/40px "Open Sans", ${UI};
  letter-spacing: -0.3px;
  color: #555;
`;

const Track = styled.span<{ $w: number; $ml: number }>`
  width: ${(p) => p.$w}px;
  height: 2px;
  flex: none;
  margin-left: ${(p) => p.$ml}px;
  background: #b2b2b2;
`;

const Knob = styled.span`
  width: 10px;
  height: 24px;
  flex: none;
  margin: 0 3px 6px 2px;
  border: 2px solid #a8a8a8;
  background: #f2f2f2;
`;

const Status = () => (
  <StatusRow>
    <Icon w={27} h={27}>
      <path d="M1 1H26V26H1Z" stroke="#8a8a8a" strokeWidth="2.200" />
      <path d="M5 4V22" stroke="#c4c4c4" strokeWidth="2" />
      <path d="M8 13V8H19V12H12M14 17H22M14 21.500H22" stroke="#8a8a8a" strokeWidth="2" />
    </Icon>
    <Icon w={26} h={27} ml={29}>
      <path d="M0 0H26V4L17 14V27H9V14L0 4Z" fill="#747474" />
    </Icon>
    <Caret ml={7} color="#555" />
    <Icon w={27} h={30} ml={29}>
      <path d="M10 5A12 12 0 1 0 19 5" stroke="#777" strokeWidth="2.400" />
      <path d="M4 0H14V9Z" fill="#666" />
      <path d="M13.500 9V23M7 16H20" stroke="#666" strokeWidth="3.200" />
    </Icon>
    <Caret ml={7} color="#444" />
    <ModeButton>
      <Icon w={27} h={25}>
        <path d="M1 1H26V24H1Z" stroke="#777" strokeWidth="2" />
        <path d="M4 6H8L11 10M23 6H19L16 10M4 19H8L11 15M23 19H19L16 15M4 12.500H23" stroke="#777" strokeWidth="2" />
        <path d="M9 9.500H18V15.500H9Z" fill="#777" />
      </Icon>
    </ModeButton>
    <Icon w={27} h={25} ml={8}>
      <path d="M1 1H26V24H1Z" stroke="#777" strokeWidth="2" />
      <path d="M4 6H23M9 10H23M4 14H6M9 14H23M9 18H23M9 21.500H23" stroke="#777" strokeWidth="1.800" />
    </Icon>
    <ZoomText>237%</ZoomText>
    <Track $w={14} $ml={0} />
    <Track $w={13} $ml={14} />
    <Track $w={84} $ml={19} />
    <Knob />
    <Track $w={37} $ml={0} />
    <Track $w={8} $ml={21} />
    <Track $w={4} $ml={13} />
    <Icon w={27} h={24} ml={7}>
      <path d="M1 1H26V23H1Z" stroke="#777" strokeWidth="2.200" />
      <path d="M8 8L10.500 10M19 8L16.500 10M8 17L10.500 15M19 17L16.500 15" stroke="#777" strokeWidth="2" />
      <path d="M10.500 10H16.500V15H10.500Z" fill="#aaa" />
      <path d="M5 4.500H9M5 4.500V8M22 4.500H18M22 4.500V8M5 20H9M5 20V17M22 20H18M22 20V17" stroke="#888" strokeWidth="1.800" />
    </Icon>
    <Icon w={27} h={24} ml={29}>
      <path d="M0 0H17V24H0Z" fill="#777" />
      <path d="M17 1H26V9L22 13V23H17" stroke="#777" strokeWidth="2.200" />
    </Icon>
    <Caret ml={6} color="#444" />
  </StatusRow>
);

/* ---------- windows task bar ---------- */

const TaskBar = styled.footer`
  display: flex;
  height: 76px;
  flex: none;
  background: #43433d;
  border-top: 1px solid #6e6e6a;
  border-bottom: 2px solid #000;
`;

const StartButton = styled.div`
  width: 95px;
  padding: 21px 0 0 30px;
`;

const Task = styled.div<{ $w: number; $ml: number; $active?: boolean; $pl: number }>`
  display: flex;
  align-items: center;
  width: ${(p) => p.$w}px;
  height: 73px;
  margin-left: ${(p) => p.$ml}px;
  padding-left: ${(p) => p.$pl}px;
  border-bottom: 4px solid #76b1e6;
  background: ${(p) => (p.$active ? "#696963" : "transparent")};
`;

const TaskLabel = styled.span<{ $ls?: number }>`
  margin: 0 0 0 9px;
  padding-top: 3px;
  font: 22.5px/40px "Open Sans", "Noto Sans CJK SC", sans-serif;
  letter-spacing: ${(p) => p.$ls ?? 0.5}px;
  color: #f0f0f0;
  white-space: pre;
`;

const Tray = styled.div`
  display: flex;
  align-items: center;
  height: 73px;
  margin-left: 24px;
`;

const ImeMode = styled.span`
  width: 25px;
  margin-left: 17px;
  font: 500 24px/40px ${CJK};
  color: #fff;
`;

const CmdIcon = () => (
  <Icon w={42} h={36}>
    <path d="M0 0H42V36H0Z" fill="#8d8d8d" />
    <path d="M0 0H42V4H0Z" fill="#d9d9d9" />
    <path d="M1.500 5H40.500V34.500H1.500Z" fill="#000" />
    <path d="M9 12H6V17H9M12 12V13M12 16V17M15 11L18 17M21 12L23 17M25 17H36" stroke="#d0d0d0" strokeWidth="1.500" />
  </Icon>
);

const Tasks = () => (
  <TaskBar>
    <StartButton>
      <Icon w={31} h={31}>
        <path d="M0 4.500L13 2.500V15H0ZM14.500 2.300L31 0V15H14.500ZM0 16.500H13V28.500L0 26.500ZM14.500 16.500H31V31L14.500 28.700Z" fill="#fff" />
      </Icon>
    </StartButton>
    <Task $w={297} $ml={0} $pl={19} $active>
      <Icon w={43} h={43}>
        <path d="M0 0H28V43H0Z" fill="#3553b0" />
        <path d="M28 6H43V37H28Z" fill="#fff" />
        <path d="M4 14V31L14 25V20Z" fill="#fff" />
        <path d="M24 14V31L14 25V20Z" fill="#c4c9d6" />
        <path d="M10 17L14 20V26L10 29Z" fill="#e6e8ee" />
        <path d="M32 14H38V20H32ZM33 24H38V29H33Z" stroke="#444" strokeWidth="2" />
      </Icon>
      <TaskLabel $ls={0.6}>Mindjet MindMa...</TaskLabel>
    </Task>
    <Task $w={280} $ml={9} $pl={12}>
      <Icon w={44} h={44}>
        <path d="M4 0L18 2L26 12L12 32L0 14Z" fill="#f0455c" />
        <path d="M0 22L8 20L10 32L2 30Z" fill="#f78c2a" />
        <path d="M30 0L44 12V34L34 44L20 36Z" fill="#3d6fe0" />
        <path d="M22 34L34 44L44 36V22Z" fill="#1a7cf2" />
        <path d="M2 44L8 28L24 36Z" fill="#a24f86" />
        <path d="M8 8H35V36H8Z" fill="#0a0a0a" />
        <path d="M11 12H17M14 12V22M11 22H17M21 12H27V19C27 22 23 23 20 21M11 31H21" stroke="#fff" strokeWidth="2.200" />
      </Icon>
      <TaskLabel $ls={0.55}>cloud2020 [D:\de...</TaskLabel>
    </Task>
    <Task $w={279} $ml={16} $pl={12}>
      <Icon w={42} h={43} vb="0 0 42 42">
        <path d="M21 21L2.800 10.500A21 21 0 0 1 39.200 10.500Z" fill="#e1523d" />
        <path d="M21 21L39.200 10.500A21 21 0 0 1 21 42Z" fill="#f9cf45" />
        <path d="M21 21L21 42A21 21 0 0 1 2.800 10.500Z" fill="#21a05a" />
        <path d="M21 11H39.500L41 16H21Z" fill="#f9cf45" />
        <path d="M21 11H39.500L38 8.500H18Z" fill="#e1523d" />
        <path d="M12 26L2.800 10.500L8 14L16 30Z" fill="#21a05a" />
        <path d="M30 26L21 42H17L24 30Z" fill="#f9cf45" />
        <circle cx="21" cy="21" r="10" fill="#f4f4f4" />
        <circle cx="21" cy="21" r="8" fill="#4a89f0" />
      </Icon>
      <TaskLabel $ls={0.4}>localhost:84/con...</TaskLabel>
    </Task>
    <Task $w={280} $ml={17} $pl={11}>
      <CmdIcon />
      <TaskLabel $ls={1}>C:\WINDOWS\sy...</TaskLabel>
    </Task>
    <Task $w={280} $ml={14} $pl={12}>
      <CmdIcon />
      <TaskLabel>C:\Windows\Syst...</TaskLabel>
    </Task>
    <Task $w={279} $ml={17} $pl={10}>
      <Icon w={44} h={44}>
        <path d="M20 6C34 2 42 12 40 24C38 36 28 42 18 40C12 38 18 30 10 30C4 31 0 27 1 21C2 13 10 8 20 6Z" fill="#a9d8ee" />
        <path d="M20 8C34 6 38 14 36 24C30 12 16 10 4 20C6 13 12 10 20 8Z" fill="#d8eef8" />
        <circle cx="9" cy="22" r="3.600" fill="#d8553b" />
        <circle cx="16" cy="15" r="3.600" fill="#5fae3e" />
        <circle cx="26" cy="12" r="3.600" fill="#f2c13c" />
        <circle cx="20" cy="26" r="3.400" fill="#2d6b9a" />
        <path d="M37 8L29 26L22 44L26 24L33 7Z" fill="#e5973a" />
        <path d="M33 8L34 0L44 4L38 10Z" fill="#c79a64" />
      </Icon>
      <TaskLabel $ls={0.6}>无标题 - 画图</TaskLabel>
    </Task>
    <Task $w={279} $ml={17} $pl={10}>
      <Icon w={44} h={42}>
        <path d="M16 0L40 2L43 38L38 42L1 32Z" fill="#c9d6da" />
        <path d="M15 4L37 6L31 38L1 31Z" fill="#56b2cd" />
        <path d="M15 4L37 6L35 17L11 14Z" fill="#b4e0ea" />
        <path d="M38 6L43 38L38 42L32 38Z" fill="#e5e9ea" />
      </Icon>
      <TaskLabel $ls={0.5}>*无标题 - 记事本</TaskLabel>
    </Task>
    <Tray>
      <Icon w={22} h={14}>
        <path d="M1 13L11 2L21 13" stroke="#eee" strokeWidth="2.400" />
      </Icon>
      <Icon w={27} h={27} ml={21}>
        <path d="M9 0L13.500 3L18 0L20 6L26 7L24 13L27 19L21 20L18 27L13.500 23L9 27L6 20L0 19L3 13L1 7L7 6Z" fill="#f2a3a3" />
        <circle cx="13.500" cy="13.500" r="5.500" fill="#b9b6d8" />
        <path d="M10 15L13 11L17 15" stroke="#5b7fc4" strokeWidth="2" />
      </Icon>
      <Icon w={31} h={24} ml={16}>
        <path d="M3 1V6M8 1V6M1 6H10V11L7 14H4L1 11ZM5.500 14V19H9" stroke="#fff" strokeWidth="2" />
        <path d="M13 5H28V21H8V18" stroke="#fff" strokeWidth="2" />
        <path d="M13 8H25V18H11Z" fill="#fff" />
        <path d="M29 10H31V16H29Z" fill="#fff" />
      </Icon>
      <Icon w={31} h={26} ml={14}>
        <path d="M1 9H5L11 3V23L5 17H1Z" stroke="#fff" strokeWidth="2" />
        <path d="M16 9Q19 13 16 17M20 6Q25 13 20 20" stroke="#fff" strokeWidth="2" />
        <path d="M24 2Q32 13 24 24" stroke="#999" strokeWidth="2" />
      </Icon>
      <ImeMode>中</ImeMode>
      <Icon w={30} h={31} ml={25}>
        <path d="M0 5L25 0L30 25L6 31Z" fill="#ea5a1e" />
        <path d="M22 9C16 6 9 8 9 12C9 17 21 14 21 19C21 24 13 24 7 21" stroke="#fff" strokeWidth="4.400" />
      </Icon>
      <Icon w={31} h={30} ml={41} mt={1}>
        <path d="M1.200 1.200H29.800V23H20L15.500 28.500L11 23H1.200Z" stroke="#fff" strokeWidth="2.200" />
      </Icon>
      <Divider $ml={38} $h={73} $c="#8f8f8b" $w={1} />
    </Tray>
  </TaskBar>
);

export default function App() {
  return (
    <Screen>
      <Global />
      <TopHeader />
      <Body>
        <MainColumn>
          <WorkArea>
            <MapArea />
            <Splitter />
            <Notes />
          </WorkArea>
          <DocTabs />
        </MainColumn>
        <SideTabs />
      </Body>
      <Status />
      <Tasks />
    </Screen>
  );
}
